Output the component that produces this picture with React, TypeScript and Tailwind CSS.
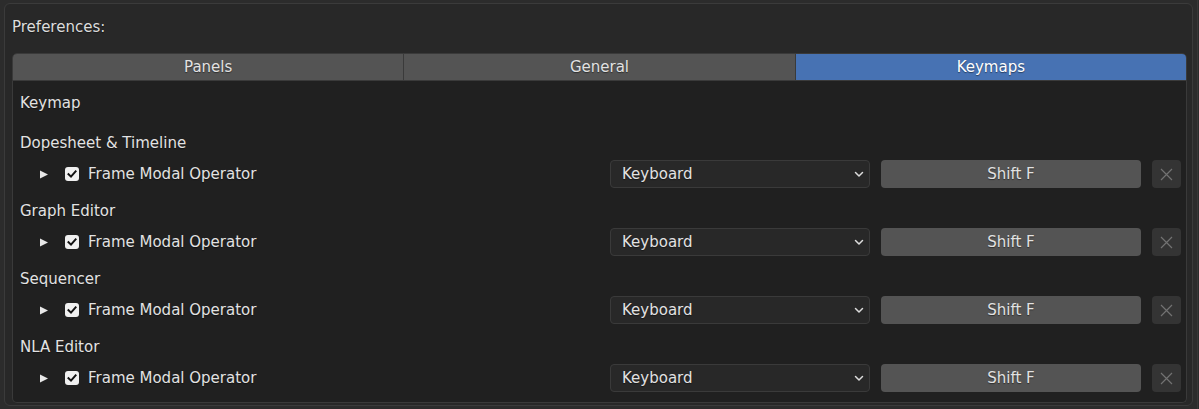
import React from "react";

function Triangle() {
  return (
    <svg width="10" height="9" viewBox="0 0 10 9" className="block">
      <path d="M1 0.5 L9 4.5 L1 8.5 Z" fill="#e8e8e8" />
    </svg>
  );
}

function Checkbox() {
  return (
    <div className="w-[14px] h-[14px] rounded-[3px] bg-[#f0f0f0] flex items-center justify-center">
      <svg width="10" height="10" viewBox="0 0 10 10">
        <path d="M1.5 5.2 L4 7.6 L8.6 2.4" stroke="#111" strokeWidth="2" fill="none" strokeLinecap="square" />
      </svg>
    </div>
  );
}

function Chevron() {
  return (
    <svg width="10" height="7" viewBox="0 0 10 7">
      <path d="M1.5 1.5 L5 5 L8.5 1.5" stroke="#dcdcdc" strokeWidth="1.5" fill="none" strokeLinecap="round" strokeLinejoin="round" />
    </svg>
  );
}

function XIcon() {
  return (
    <svg width="13" height="13" viewBox="0 0 13 13">
      <path d="M1 1 L12 12 M12 1 L1 12" stroke="#727272" strokeWidth="1.2" />
    </svg>
  );
}

function Row() {
  return (
    <div className="h-[28px] flex items-center pr-[5px]">
      <div className="flex-1 flex items-center">
        <div className="ml-[19px]">
          <Triangle />
        </div>
        <div className="ml-[16px]">
          <Checkbox />
        </div>
        <span className="ml-[9px]">Frame Modal Operator</span>
      </div>
      <div className="w-[260px] h-[28px] rounded-[4px] bg-[#282828] border border-[#3a3a3a] flex items-center pl-[11px] pr-[5px]">
        <span className="flex-1">Keyboard</span>
        <Chevron />
      </div>
      <div className="ml-[11px] w-[260px] h-[28px] rounded-[4px] bg-[#545454] flex items-center justify-center">
        Shift F
      </div>
      <div className="ml-[11px] w-[29px] h-[28px] rounded-[4px] bg-[#343434] flex items-center justify-center">
        <XIcon />
      </div>
    </div>
  );
}

function Group({ title }: { title: string }) {
  return (
    <div>
      <div className="h-[28px] flex items-center">{title}</div>
      <div className="mt-[3px]">
        <Row />
      </div>
    </div>
  );
}

export default function App() {
  return (
    <div className="w-[1199px] h-[409px] overflow-hidden bg-[#2c2c2c] flex font-['DejaVu_Sans',sans-serif] text-[15px] text-[#e2e2e2] [text-shadow:0_1px_1px_rgba(0,0,0,0.45)]">
      <div className="ml-[4px] mt-[3px] w-[1189px] h-[403px] rounded-[6px] border border-[#3b3b3b] bg-[#282828] pl-[7px] pr-[5px] flex flex-col">
        <div className="h-[49px] pt-[14px] leading-[18px] text-[#dddddd]">Preferences:</div>
        <div className="h-[28px] flex rounded-t-[5px] overflow-hidden border border-[#3a3a3a]">
          <div className="flex-1 bg-[#545454] flex items-center justify-center">Panels</div>
          <div className="flex-1 bg-[#545454] border-l border-[#3a3a3a] flex items-center justify-center">General</div>
          <div className="flex-1 bg-[#4772b3] border-l border-[#3a3a3a] flex items-center justify-center text-white">Keymaps</div>
        </div>
        <div className="h-[322px] bg-[#202020] border-x border-b border-[#3a3a3a] rounded-b-[5px] pl-[7px] pt-[8px] flex flex-col">
          <div className="h-[28px] flex items-center">Keymap</div>
          <div className="mt-[12px] flex flex-col gap-[9px]">
            <Group title="Dopesheet & Timeline" />
            <Group title="Graph Editor" />
            <Group title="Sequencer" />
            <Group title="NLA Editor" />
          </div>
        </div>
      </div>
      <div className="ml-[4px] w-[1px] h-full bg-[#383838]" />
    </div>
  );
}
